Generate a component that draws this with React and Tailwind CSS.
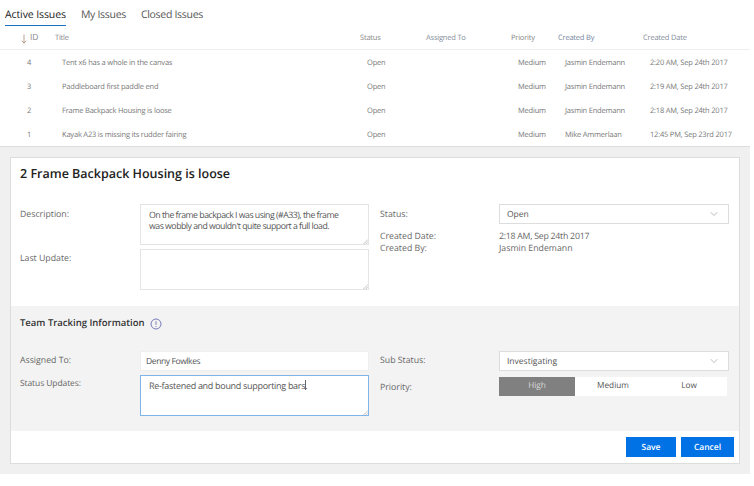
import React from "react";
import { ChevronDown } from "lucide-react";

const rows = [
  ["4", "Tent x6 has a whole in the canvas", "Jasmin Endemann", "2:20 AM, Sep 24th 2017"],
  ["3", "Paddleboard first paddle end", "Jasmin Endemann", "2:19 AM, Sep 24th 2017"],
  ["2", "Frame Backpack Housing is loose", "Jasmin Endemann", "2:18 AM, Sep 24th 2017"],
  ["1", "Kayak A23 is missing its rudder fairing", "Mike Ammerlaan", "12:45 PM, Sep 23rd 2017"],
];

const cols = "grid grid-cols-[55px_305px_66px_85px_47px_85px_1fr]";

function Select({ value, className }) {
  return (
    <div className={"w-[230px] h-[20px] bg-white flex items-center justify-between pl-[7px] pr-[8px] text-[8.5px] text-[#555] " + className}>
      <span className="pt-[2px]">{value}</span>
      <ChevronDown size={12} strokeWidth={1} className="text-[#777]" />
    </div>
  );
}

function Area({ value, className, children }) {
  return (
    <div className="relative w-[229px] h-[41px]">
      <textarea
        readOnly
        defaultValue={value}
        className={"block w-[229px] h-[41px] bg-white pl-[8px] pr-[14px] pt-[5px] pb-[4px] leading-[10.5px] text-[#555] outline-none resize-none [text-rendering:geometricPrecision] " + className}
      />
      <svg width="5" height="5" viewBox="0 0 5 5" className="absolute right-[1px] bottom-[1px]" stroke="#aaa" strokeWidth="0.7">
        <path d="M0.5 5L5 0.5M2.8 5L5 2.8" />
      </svg>
      {children}
    </div>
  );
}

export default function App() {
  return (
    <div className="w-[754px] h-[486px] bg-white overflow-hidden font-['Open_Sans',sans-serif] text-[#666] [text-rendering:geometricPrecision]">
      <div className="h-[146px] w-[750px]">
        <div className="flex h-[26px] pl-[5px] gap-[15px] text-[10.5px] leading-[15px] pt-[8px] text-[#555]">
          <div className="h-[18px] border-b border-[#1a6fc4] text-[#222] tracking-[-0.1px]">Active Issues</div>
          <div className="tracking-[-0.3px]">My Issues</div>
          <div className="tracking-[-0.3px]">Closed Issues</div>
        </div>
        <div className={cols + " h-[24px] items-center pt-[2px] border-b border-[#eee] text-[7.5px] tracking-[-0.2px] text-[#888]"}>
          <div className="flex items-center pl-[21px] gap-[3px]">
            <svg width="6" height="10" viewBox="0 0 6 10" className="text-[#a08a78]">
              <path d="M3 0.5V9M0.8 6.8L3 9.2L5.2 6.8" fill="none" stroke="currentColor" strokeWidth="0.8" />
            </svg>
            <span className="text-[8.5px]">ID</span>
          </div>
          <div>Title</div>
          <div>Status</div>
          <div className="text-[#7f8b97]">Assigned To</div>
          <div>Priority</div>
          <div className="text-[#75859c]">Created By</div>
          <div className="text-[#7f8b97]">Created Date</div>
        </div>
        {rows.map((r) => (
          <div key={r[0]} className={cols + " h-[24px] items-center pt-[3px] text-[7.5px] tracking-[-0.2px] text-[#777]"}>
            <div className="pl-[27px]">{r[0]}</div>
            <div className="pl-[7px]">{r[1]}</div>
            <div className="pl-[7px]">Open</div>
            <div />
            <div className="pl-[7px]">Medium</div>
            <div className="pl-[7px]">{r[2]}</div>
            <div className="pl-[7px] whitespace-nowrap">{r[3]}</div>
          </div>
        ))}
      </div>

      <div className="w-[750px] h-[328px] bg-[#f0f0f0] border-t border-[#ddd] pt-[10px] px-[10px]">
        <div className="w-[730px] h-[307px] bg-white border border-[#ddd] flex flex-col">
          <div className="h-[148px]">
            <h2 className="pl-[9px] pt-[7px] h-[46px] text-[12.5px] leading-[18px] font-semibold text-[#222]">2 Frame Backpack Housing is loose</h2>
            <div className="flex">
              <div className="w-[369px] flex">
                <div className="w-[129px] pl-[9px] text-[8.75px]">
                  <div className="h-[45px] pt-[4px] leading-[12px]">Description:</div>
                  <div className="pt-[3px] leading-[12px]">Last Update:</div>
                </div>
                <div className="flex flex-col gap-[4px]">
                  <Area className="border border-[#e4e4e4] text-[8.75px] tracking-[-0.5px]" value={"On the frame backpack I was using (#A33), the frame was wobbly and wouldn't quite support a full load."} />
                  <Area className="border border-[#e4e4e4] text-[8.75px]" value="" />
                </div>
              </div>
              <div className="flex-1 text-[8.75px]">
                <div className="flex h-[27px]">
                  <div className="w-[119px] pt-[4px] leading-[12px]">Status:</div>
                  <Select value="Open" className="border border-[#ddd]" />
                </div>
                <div className="flex leading-[11.5px]">
                  <div className="w-[119px]">Created Date:<br />Created By:</div>
                  <div><span className="tracking-[-0.25px]">2:18 AM, Sep 24th 2017</span><br />Jasmin Endemann</div>
                </div>
              </div>
            </div>
          </div>

          <div className="h-[125px] bg-[#f3f3f3] pl-[9px]">
            <div className="h-[45px] flex items-center gap-[5px] pb-[10px] text-[9.5px] font-semibold text-[#333]">
              <span>Team Tracking Information</span>
              <svg width="12" height="12" viewBox="0 0 12 12" fill="none" stroke="#5a5aa8" strokeWidth="0.8">
                <circle cx="6" cy="6" r="5" />
                <path d="M6 3.2V6.8M6 8V8.9" />
              </svg>
            </div>
            <div className="flex">
              <div className="w-[360px] flex">
                <div className="w-[120px] text-[8.75px]">
                  <div className="h-[24px] pt-[3px] leading-[12px]">Assigned To:</div>
                  <div className="pt-[3px] leading-[12px] text-[8.5px] tracking-[-0.1px]">Status Updates:</div>
                </div>
                <div>
                  <div className="w-[229px] h-[20px] border border-[#efefef] bg-white flex items-center pl-[5px] pt-[2px] text-[8.5px] tracking-[-0.4px] text-[#555]">Denny Fowlkes</div>
                  <div className="mt-[4px]">
                    <Area className="border border-[#7db4ea] text-[9px] tracking-[-0.3px]" value="Re-fastened and bound supporting bars.">
                      <span className="absolute left-[165px] top-[5px] w-px h-[10px] bg-[#666]" />
                    </Area>
                  </div>
                </div>
              </div>
              <div className="flex-1 text-[8.75px]">
                <div className="flex h-[26px]">
                  <div className="w-[119px] pt-[3px] leading-[12px]">Sub Status:</div>
                  <Select value="Investigating" className="border border-[#ddd]" />
                </div>
                <div className="flex">
                  <div className="w-[119px] pt-[4px] leading-[12px]">Priority:</div>
                  <div className="flex h-[19px] w-[228px] bg-white text-[8.25px] text-[#555]">
                    <div className="w-[76px] bg-[#808080] text-[#d8d8d8] flex items-center justify-center">High</div>
                    <div className="w-[76px] flex items-center justify-center">Medium</div>
                    <div className="w-[76px] flex items-center justify-center">Low</div>
                  </div>
                </div>
              </div>
            </div>
          </div>

          <div className="flex-1 flex justify-end items-start gap-[5px] pt-[6px] pr-[5px] text-[8.5px] font-semibold text-white">
            <div className="w-[50px] h-[20px] pt-[3px] bg-[#0072e6] flex items-center justify-center">Save</div>
            <div className="w-[53px] h-[20px] pt-[3px] bg-[#0072e6] flex items-center justify-center">Cancel</div>
          </div>
        </div>
      </div>
    </div>
  );
}
